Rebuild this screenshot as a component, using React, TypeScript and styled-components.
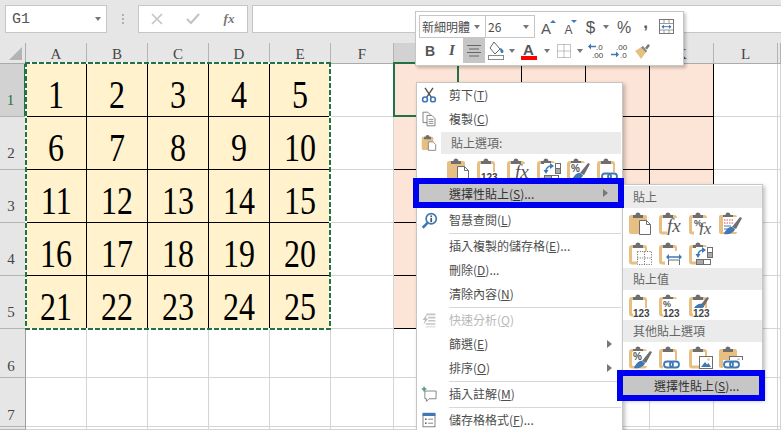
import React from "react";
import styled, { createGlobalStyle } from "styled-components";

const Global = createGlobalStyle`
  html, body { margin: 0; padding: 0; background: #fff; }
  body { font-family: "Noto Sans CJK TC", "Noto Sans", sans-serif; }
`;

const Page = styled.div`
  position: relative;
  width: 781px;
  height: 430px;
  overflow: hidden;
  background: #fff;
`;

/* ---------- formula bar ---------- */
const FormulaBar = styled.div`
  display: flex;
  align-items: flex-start;
  height: 43px;
  box-sizing: border-box;
  padding: 5px 0 0 5px;
  background: #e6e6e6;
`;
const Field = styled.div<{ $w?: number }>`
  display: flex;
  align-items: center;
  box-sizing: border-box;
  height: 28px;
  background: #fff;
  border: 1px solid #c6c6c6;
  ${(p) => (p.$w ? `width: ${p.$w}px; flex: none;` : "flex: 1; border-right: none;")}
`;
const NameText = styled.span`
  flex: 1;
  padding-left: 6px;
  font: 15px "Liberation Mono", monospace;
  color: #555;
`;
const Grip = styled.div`
  flex: none;
  width: 31px;
  height: 28px;
  display: flex;
  flex-direction: column;
  align-items: center;
  justify-content: center;
  gap: 2px;
  & > i { display: block; width: 2px; height: 2px; background: #b0b0b0; }
`;
const FxSlot = styled.span`
  flex: none;
  width: 36px;
  display: flex;
  justify-content: center;
  align-items: center;
`;
const FxText = styled.span`
  font: italic bold 13px "Liberation Serif", serif;
  color: #777;
`;
const Spacer = styled.div`
  flex: none;
  width: 4px;
`;
const Caret = styled.i<{ $c?: string; $mr?: number }>`
  display: block;
  flex: none;
  width: 0;
  height: 0;
  border-left: 3.5px solid transparent;
  border-right: 3.5px solid transparent;
  border-top: 4px solid ${(p) => p.$c || "#777"};
  margin-right: ${(p) => p.$mr || 0}px;
`;

/* ---------- sheet ---------- */
const Sheet = styled.div`
  display: grid;
  grid-template-columns: 26px repeat(5, 61px) 63px repeat(6, 64px) 1fr;
  grid-template-rows: 21px repeat(5, 53px) repeat(2, 49px) 1fr;
  height: 387px;
`;
const Corner = styled.div`
  position: relative;
  background: #e6e6e6;
  border-right: 1px solid #ababab;
  border-bottom: 1px solid #ababab;
  box-sizing: border-box;
  &::after {
    content: "";
    position: absolute;
    right: 3px;
    bottom: 3px;
    width: 0;
    height: 0;
    border-left: 13px solid transparent;
    border-bottom: 13px solid #b4b4b4;
  }
`;
const ColHead = styled.div<{ $on?: boolean }>`
  display: flex;
  align-items: flex-end;
  justify-content: center;
  box-sizing: border-box;
  background: ${(p) => (p.$on ? "#d2d2d2" : "#e6e6e6")};
  border-bottom: 1px solid #ababab;
  border-right: 1px solid #b4b4b4;
  font: 15px/18px "Liberation Serif", serif;
  color: #444;
`;
const RowHead = styled.div<{ $on?: boolean; $pad: number }>`
  display: flex;
  align-items: flex-end;
  justify-content: center;
  box-sizing: border-box;
  padding-bottom: ${(p) => p.$pad}px;
  padding-right: 3px;
  background: ${(p) => (p.$on ? "#d2d2d2" : "#e6e6e6")};
  border-bottom: 1px solid #b4b4b4;
  border-right: ${(p) => (p.$on ? "2px solid #217346" : "1px solid #9e9e9e")};
  font: 15px/14px "Liberation Serif", serif;
  color: ${(p) => (p.$on ? "#217346" : "#444")};
`;
const Cell = styled.div<{ $tone?: "a" | "b" }>`
  display: flex;
  align-items: flex-end;
  justify-content: center;
  box-sizing: border-box;
  background: ${(p) => (p.$tone === "a" ? "#fff2cc" : p.$tone === "b" ? "#fce4d6" : "#fff")};
  border-right: 1px solid ${(p) => (p.$tone ? "#000" : "#d4d4d4")};
  border-bottom: 1px solid ${(p) => (p.$tone ? "#000" : "#d4d4d4")};
`;
const Num = styled.span`
  display: inline-block;
  font: 40px/40px "Liberation Serif", serif;
  color: #000;
  transform: scaleX(0.8);
  padding-bottom: 1px;
`;
const dashH = "repeating-linear-gradient(90deg, #217346 0 5px, #fff 5px 7px)";
const dashV = "repeating-linear-gradient(180deg, #217346 0 5px, #fff 5px 7px)";
const Marquee = styled.div`
  position: absolute;
  left: 25px;
  top: 62px;
  width: 306px;
  height: 268px;
  pointer-events: none;
  background:
    ${dashH} left top / 100% 2px no-repeat,
    ${dashH} left bottom / 100% 2px no-repeat,
    ${dashV} left top / 2px 100% no-repeat,
    ${dashV} right top / 2px 100% no-repeat;
`;
const ActiveCell = styled.div`
  position: absolute;
  left: 393px;
  top: 62px;
  width: 66px;
  height: 55px;
  box-sizing: border-box;
  border: 2px solid #217346;
`;

/* ---------- mini toolbar ---------- */
const Toolbar = styled.div`
  position: absolute;
  left: 415px;
  top: 11px;
  width: 269px;
  height: 55px;
  box-sizing: border-box;
  padding: 3px 3px 2px;
  background: #fff;
  border: 1px solid #c6c6c6;
  box-shadow: 2px 2px 3px rgba(0, 0, 0, 0.22);
`;
const ToolRow = styled.div<{ $h: number }>`
  display: flex;
  align-items: stretch;
  height: ${(p) => p.$h}px;
`;
const Select = styled.div<{ $w: number }>`
  display: flex;
  align-items: center;
  justify-content: space-between;
  box-sizing: border-box;
  flex: none;
  width: ${(p) => p.$w}px;
  margin-right: -1px;
  padding: 0 5px 0 2px;
  border: 1px solid #c6c6c6;
  font-size: 12px;
  color: #4d4d4d;
  &:last-of-type { margin-right: 0; }
`;
const Tool = styled.div<{ $w: number; $on?: boolean }>`
  display: flex;
  align-items: center;
  justify-content: center;
  flex: none;
  width: ${(p) => p.$w}px;
  background: ${(p) => (p.$on ? "#c6c6c6" : "transparent")};
`;
const BoldB = styled.span`
  font: bold 14px "Liberation Sans", sans-serif;
  color: #555;
`;
const ItalicI = styled.span`
  font: italic 15px "Liberation Serif", serif;
  color: #555;
  font-weight: bold;
`;
const ToolGlyph = styled.span<{ $s: number; $b?: boolean; $pb?: number }>`
  font: ${(p) => (p.$b ? "bold " : "")}${(p) => p.$s}px "Liberation Sans", sans-serif;
  color: #555;
  padding-top: 2px;
  padding-bottom: ${(p) => p.$pb || 0}px;
`;

/* ---------- menus ---------- */
const Menu = styled.div`
  position: absolute;
  left: 416px;
  top: 82px;
  width: 207px;
  height: 360px;
  box-sizing: border-box;
  background: #fff;
  border: 1px solid #c6c6c6;
  box-shadow: 2px 2px 4px rgba(0, 0, 0, 0.25);
`;
const SubMenu = styled.div`
  position: absolute;
  left: 622px;
  top: 184px;
  width: 141px;
  height: 215px;
  box-sizing: border-box;
  padding-top: 1px;
  background: #fff;
  border: 1px solid #c6c6c6;
  box-shadow: 2px 2px 4px rgba(0, 0, 0, 0.25);
`;
const Row = styled.div<{ $off?: boolean }>`
  display: flex;
  align-items: center;
  height: 24px;
  font-size: 12px;
  line-height: 24px;
  color: ${(p) => (p.$off ? "#b8b8b8" : "#4d4d4d")};
`;
const IconSlot = styled.span`
  flex: none;
  width: 32px;
  height: 24px;
  display: flex;
  align-items: center;
  justify-content: center;
  padding-right: 8px;
  box-sizing: border-box;
`;
const Label = styled.span`
  flex: 1;
  white-space: nowrap;
`;
const Arrow = styled.i`
  display: block;
  flex: none;
  width: 0;
  height: 0;
  margin-right: 10px;
  border-top: 4px solid transparent;
  border-bottom: 4px solid transparent;
  border-left: 5px solid #777;
`;
const Sep = styled.div`
  height: 1px;
  margin: 1px 1px 0 32px;
  background: #d8d8d8;
`;
const PasteHeadRow = styled.div`
  display: flex;
  align-items: center;
  height: 22px;
  margin-top: 1px;
`;
const HeadIcon = styled.span`
  flex: none;
  width: 24px;
  display: flex;
  justify-content: center;
`;
const HeadBar = styled.div`
  flex: 1;
  height: 22px;
  padding-left: 10px;
  margin-right: 1px;
  background: #ebebeb;
  font-size: 12px;
  line-height: 22px;
  color: #666;
`;
const SubHead = styled.div`
  height: 22px;
  padding-left: 10px;
  background: #ebebeb;
  font-size: 12px;
  line-height: 22px;
  color: #666;
`;
const IconRow = styled.div<{ $pl: number; $h: number }>`
  display: flex;
  gap: 6px;
  height: ${(p) => p.$h}px;
  padding: 4px 0 0 ${(p) => p.$pl}px;
  box-sizing: border-box;
`;
const Highlight = styled.div`
  position: relative;
  z-index: 5;
  display: flex;
  align-items: center;
  background: #c6c6c6;
  outline: 6px solid #0000f0;
  font-size: 12px;
  color: #333;
`;
const MainHighlight = styled(Highlight)`
  height: 18px;
  margin: 4px 4px 6px 2px;
  padding-left: 30px;
`;
const SubHighlight = styled(Highlight)`
  height: 19px;
  margin: 4px 3px 0 0;
  padding-left: 31px;
`;
const Mn = styled.u`
  text-underline-offset: 1px;
`;

/* ---------- icons ---------- */
const PEACH = "#e8bf82";
const GR = "#6e6e6e";
const BL = "#3f78b5";

const Clip = ({ solid, children }: { solid?: boolean; children?: React.ReactNode }) => (
  <svg width="24" height="23" viewBox="0 0 24 23" style={{ flex: "none" }}>
    {solid ? (
      <rect x="0" y="3" width="18" height="19" rx="2" fill={PEACH} />
    ) : (
      <>
        <rect x="1.500" y="4.500" width="15" height="16.500" rx="1.500" fill="#fff" stroke={PEACH} strokeWidth="3" />
        <rect x="3" y="6" width="13" height="13" fill="#fff" />
      </>
    )}
    <path d="M4 6V3h2.500a2.500 2.500 0 0 1 5 0H14v3z" fill={GR} />
    {children}
  </svg>
);
const Doc = () => (
  <>
    <path d="M10.500 8.500h7l4 4v10h-11z" fill="#fff" stroke={GR} />
    <path d="M17.500 8.500v4h4" fill="none" stroke={GR} />
  </>
);
const T = ({ x, y, s, children, i, c, w }: { x: number; y: number; s: number; children: string; i?: boolean; c?: string; w?: number }) => (
  <text
    x={x}
    y={y}
    fontSize={s}
    fontFamily={i ? "Liberation Serif, serif" : "Liberation Sans, sans-serif"}
    fontStyle={i ? "italic" : "normal"}
    fontWeight={w || 400}
    fill={c || "#444"}
  >
    {children}
  </text>
);
const White = ({ x, y, w, h }: { x: number; y: number; w: number; h: number }) => <rect x={x} y={y} width={w} height={h} fill="#fff" />;
const Fx = () => (
  <>
    <White x={8} y={6} w={16} h={17} />
    <T x={8} y={20} s={19} i c="#555">fx</T>
  </>
);
const PctFx = () => (
  <>
    <White x={5} y={6} w={19} h={17} />
    <T x={5} y={14} s={9} w={700} c="#555">%</T>
    <T x={10} y={22} s={17} i c="#555">fx</T>
  </>
);
const BrushOver = ({ pct }: { pct?: boolean }) => (
  <>
    <White x={4} y={5} w={14} h={15} />
    {pct ? (
      <T x={4} y={14} s={10} w={700} c="#555">%</T>
    ) : (
      <>
        <path d="M5 8h10M5 11h10" stroke="#d9534f" strokeDasharray="1.500 1" />
        <path d="M5 14h7M5 17h4" stroke={BL} />
      </>
    )}
    <path d="M13 15l8-10 2 1-6 11z" fill={GR} />
    <path d="M5 22c1-3 5-8 8-7l3 2c-1 4-7 6-11 5z" fill={BL} />
  </>
);
const Dotted = () => (
  <>
    <White x={8} y={9} w={16} h={14} />
    <path d="M8.500 9.500h14v13h-14zM15.500 9.500v13M8.500 16h14" fill="none" stroke="#666" strokeDasharray="1 1.400" />
  </>
);
const ColW = () => (
  <>
    <White x={6} y={9} w={18} h={14} />
    <path d="M9 15h12" stroke={BL} strokeWidth="1.500" />
    <path d="M10 12l-3 3 3 3zM20 12l3 3-3 3z" fill={BL} />
    <path d="M9.500 23v-5h11v5" fill="none" stroke={GR} />
  </>
);
const Swap = () => (
  <>
    <White x={7} y={5} w={17} h={18} />
    <path d="M9 13a5 5 0 0 1 5-5" fill="none" stroke={BL} strokeWidth="1.500" />
    <path d="M13 5l4 3-4 3zM6.500 12l2.500 4 2.500-4z" fill={BL} />
    <rect x="18.500" y="5.500" width="5" height="5" fill="#fff" stroke={GR} />
    <rect x="18.500" y="10.500" width="5" height="5" fill="#a9a9a9" stroke={GR} />
    <rect x="7.500" y="17.500" width="7" height="5" fill="#a9a9a9" stroke={GR} />
    <rect x="14.500" y="17.500" width="7" height="5" fill="#fff" stroke={GR} />
  </>
);
const Num123 = () => (
  <>
    <White x={4} y={14} w={20} h={9} />
    <T x={4} y={22.500} s={10} w={700} c="#444">123</T>
  </>
);
const LinkOver = () => (
  <>
    <White x={4} y={14} w={20} h={9} />
    <rect x="5" y="15.500" width="9" height="6" rx="3" fill="none" stroke={BL} strokeWidth="1.800" />
    <rect x="11" y="15.500" width="9" height="6" rx="3" fill="none" stroke={BL} strokeWidth="1.800" />
  </>
);
const Pic = ({ x = 10, y = 10 }: { x?: number; y?: number }) => (
  <>
    <rect x={x + 0.5} y={y + 0.5} width="13" height="12" fill="#fff" stroke={GR} />
    <circle cx={x + 9.5} cy={y + 3.5} r="1.200" fill={PEACH} />
    <path d={`M${x + 2} ${y + 11}l4-5 2 2.500 1.500-1.500 2.500 4z`} fill={BL} />
  </>
);

const Scissors = () => (
  <svg width="16" height="16" viewBox="0 0 20 20">
    <path d="M5 1l8 12M15 1L7 13" stroke="#555" strokeWidth="1.800" fill="none" />
    <circle cx="5" cy="15.500" r="3" fill="none" stroke={BL} strokeWidth="2" />
    <circle cx="15" cy="15.500" r="3" fill="none" stroke={BL} strokeWidth="2" />
  </svg>
);
const CopyIcon = () => (
  <svg width="16" height="16" viewBox="0 0 20 20">
    <path d="M2.500 1.500h6l3 3v10h-9z" fill="#fff" stroke="#666" />
    <path d="M7.500 5.500h6l4 4v9h-10z" fill="#fff" stroke="#666" />
    <path d="M9.500 10.500h6M9.500 13h6M9.500 15.500h6" stroke="#777" />
  </svg>
);
const SmallPaste = () => (
  <svg width="17" height="18" viewBox="0 0 22 22">
    <rect x="1" y="3" width="15" height="17" rx="1.500" fill={PEACH} />
    <path d="M4 6V3h2a2.500 2.500 0 0 1 5 0h2v3z" fill={GR} />
    <path d="M9.500 9.500h6l3.500 3.500v7.500h-9.500z" fill="#fff" stroke={GR} />
  </svg>
);
const Lookup = () => (
  <svg width="17" height="17" viewBox="0 0 20 20">
    <circle cx="12" cy="8" r="6" fill="#fff" stroke={BL} strokeWidth="2" />
    <path d="M8 12.500L2 18.500" stroke={BL} strokeWidth="3" />
    <rect x="11" y="7" width="2" height="5" fill="#555" />
    <rect x="11" y="4" width="2" height="2" fill="#555" />
  </svg>
);
const Quick = () => (
  <svg width="16" height="16" viewBox="0 0 20 20">
    <path d="M7 2h11v2H7zM9 6h9v2H9zM9 10h9v2H9zM6 14h12v2H6zM6 18h12v1H6z" fill="#c4c4c4" />
    <path d="M8 2L2 10h3l-2 6 6-8H6z" fill="#bdbdbd" />
  </svg>
);
const Comment = () => (
  <svg width="17" height="17" viewBox="0 0 22 22">
    <path d="M5 6.500h14.500v10h-9l-3.500 3.500v-3.500H5z" fill="#fff" stroke="#666" />
    <path d="M1 4h6M4 1v6" stroke="#4c9a7e" strokeWidth="2" />
  </svg>
);
const FormatCells = () => (
  <svg width="16" height="16" viewBox="0 0 20 20">
    <rect x="2.500" y="2.500" width="15" height="16" fill="#fff" stroke="#666" />
    <rect x="2" y="1" width="16" height="4" fill={BL} />
    <rect x="5" y="8" width="2" height="2" fill="#666" />
    <path d="M9 9h6M9 14h6" stroke="#666" />
    <rect x="5" y="13" width="2" height="2" fill="#666" />
  </svg>
);
const CancelX = () => (
  <svg width="12" height="12" viewBox="0 0 12 12">
    <path d="M1 1l10 10M11 1L1 11" stroke="#c4c4c4" strokeWidth="1.600" />
  </svg>
);
const CheckMark = () => (
  <svg width="14" height="12" viewBox="0 0 14 12">
    <path d="M1 6l4 4 8-9" fill="none" stroke="#c4c4c4" strokeWidth="2.200" />
  </svg>
);
const SizeA = ({ up }: { up?: boolean }) => (
  <svg width="20" height="20" viewBox="0 0 20 20">
    <T x={up ? 5 : 5.500} y={16.500} s={up ? 15 : 12} c="#555">A</T>
    <path d={up ? "M14 6l3-3 3 3z" : "M12 3h6l-3 3z"} fill={BL} />
  </svg>
);
const Wrap = () => (
  <svg width="16" height="16" viewBox="0 0 16 16">
    <rect x="0.500" y="0.500" width="14" height="14" fill="#fff" stroke="#777" />
    <path d="M1 4.500h13M1 11h13M5 1v3M10 1v3M5 11v3M10 11v3" stroke="#999" />
    <path d="M3 7.700h9" stroke={BL} />
    <path d="M5 5.700l-2.500 2 2.500 2zM10 5.700l2.500 2-2.500 2z" fill={BL} />
  </svg>
);
const CenterLines = () => (
  <svg width="16" height="14" viewBox="0 0 16 14">
    <path d="M1 1.500h14M3 5h10M1 8.500h14M3 12h10" stroke="#666" />
  </svg>
);
const Bucket = () => (
  <svg width="18" height="20" viewBox="0 0 18 20">
    <path d="M7 1l6 7-5 5-5-6z" fill="#fff" stroke="#666" />
    <path d="M13 7c2 .5 3.500 2 3.500 3.500a1.500 1.500 0 0 1-3 0z" fill={BL} />
    <rect x="1.500" y="14.500" width="15" height="4" fill="#fff" stroke="#888" />
  </svg>
);
const FontColor = () => (
  <svg width="18" height="20" viewBox="0 0 18 20">
    <T x={3} y={14} s={15} w={700} c="#555">A</T>
    <rect x="1" y="15" width="16" height="4" fill="#ff0000" />
  </svg>
);
const Borders = () => (
  <svg width="14" height="14" viewBox="0 0 14 14">
    <path d="M.5.500h13v13H.5zM7 .5v13M.5 7h13" fill="none" stroke="#888" strokeDasharray="1 1" />
  </svg>
);
const Decimal = ({ inc }: { inc?: boolean }) => (
  <svg width="18" height="16" viewBox="0 0 18 16">
    {inc ? (
      <>
        <T x={5} y={7} s={8} c="#444">.00</T>
        <T x={9} y={15} s={8} c="#444">.0</T>
        <path d="M0 11.500h6" stroke={BL} strokeWidth="1.500" />
        <path d="M5 8.500l3 3-3 3z" fill={BL} />
      </>
    ) : (
      <>
        <T x={8} y={7} s={8} c="#444">.0</T>
        <T x={4} y={15} s={8} c="#444">.00</T>
        <path d="M2 3.500h6" stroke={BL} strokeWidth="1.500" />
        <path d="M3 .5l-3 3 3 3z" fill={BL} />
      </>
    )}
  </svg>
);
const Brush = () => (
  <svg width="18" height="18" viewBox="0 0 18 18">
    <path d="M11 6l3-4 2 1.500-3 4z" fill="#777" />
    <path d="M1 9l8-5 4 5-6 8C5 14 3 11 1 9z" fill="#e8bf82" />
    <path d="M9 4l4 5-1 1.500-5-5z" fill="#888" />
  </svg>
);
const PctNum = () => (
  <>
    <White x={4} y={5} w={14} h={9} />
    <T x={4} y={13} s={9} w={700} c="#555">%</T>
    <Num123 />
  </>
);
const BrushNum = () => (
  <>
    <path d="M10 13l8-10 2 1-6 10z" fill={GR} />
    <path d="M5 14c2-3 5-5 8-4l2 2c-1 2-6 3-10 2z" fill={BL} />
    <Num123 />
  </>
);

/* ---------- data ---------- */
const colsA = ["A", "B", "C", "D", "E"];
const colsB = ["G", "H", "I", "J", "K"];
const rowsData = [
  { n: 1, pad: 9 },
  { n: 2, pad: 9 },
  { n: 3, pad: 9 },
  { n: 4, pad: 9 },
  { n: 5, pad: 9 },
  { n: 6, pad: 4 },
  { n: 7, pad: 4 },
  { n: 8, pad: 0 },
];
const Item = ({ icon, text, m, tail, off, arrow }: { icon?: React.ReactNode; text: string; m?: string; tail?: string; off?: boolean; arrow?: boolean }) => (
  <Row $off={off}>
    <IconSlot>{icon}</IconSlot>
    <Label>
      {text}
      {m && (
        <>
          (<Mn>{m}</Mn>)
        </>
      )}
      {tail}
    </Label>
    {arrow && <Arrow />}
  </Row>
);

export default function App() {
  return (
    <Page>
      <Global />
      <FormulaBar>
        <Field $w={102}>
          <NameText>G1</NameText>
          <Caret $c="#777" $mr={5} />
        </Field>
        <Grip>
          <i />
          <i />
          <i />
        </Grip>
        <Field $w={110}>
          <FxSlot><CancelX /></FxSlot>
          <FxSlot><CheckMark /></FxSlot>
          <FxSlot><FxText>fx</FxText></FxSlot>
        </Field>
        <Spacer />
        <Field />
      </FormulaBar>

      <Sheet>
        <Corner />
        {["A", "B", "C", "D", "E", "F", "G", "H", "I", "J", "K", "L", "M"].map((c) => (
          <ColHead key={c} $on={c === "G"}>{c === "M" ? "" : c}</ColHead>
        ))}
        {rowsData.map((r) => (
          <React.Fragment key={r.n}>
            <RowHead $on={r.n === 1} $pad={r.pad}>{r.n === 8 ? "" : r.n}</RowHead>
            {colsA.map((c, i) =>
              r.n <= 5 ? (
                <Cell key={c} $tone="a">
                  <Num>{(r.n - 1) * 5 + i + 1}</Num>
                </Cell>
              ) : (
                <Cell key={c} />
              )
            )}
            <Cell />
            {colsB.map((c) => <Cell key={c} $tone={r.n <= 5 ? "b" : undefined} />)}
            <Cell />
            <Cell />
          </React.Fragment>
        ))}
      </Sheet>
      <Marquee />
      <ActiveCell />

      <Toolbar>
        <ToolRow $h={23}>
          <Select $w={67}>新細明體<Caret /></Select>
          <Select $w={50}>26<Caret /></Select>
          <Tool $w={23}><SizeA up /></Tool>
          <Tool $w={23}><SizeA /></Tool>
          <Tool $w={21}><ToolGlyph $s={17}>$</ToolGlyph></Tool>
          <Tool $w={10}><Caret /></Tool>
          <Tool $w={26}><ToolGlyph $s={16}>%</ToolGlyph></Tool>
          <Tool $w={17}><ToolGlyph $s={17} $b $pb={9}>,</ToolGlyph></Tool>
          <Tool $w={26}><Wrap /></Tool>
        </ToolRow>
        <ToolRow $h={25}>
          <Tool $w={22}><BoldB>B</BoldB></Tool>
          <Tool $w={22}><ItalicI>I</ItalicI></Tool>
          <Tool $w={22} $on><CenterLines /></Tool>
          <Tool $w={22}><Bucket /></Tool>
          <Tool $w={10}><Caret /></Tool>
          <Tool $w={24}><FontColor /></Tool>
          <Tool $w={12}><Caret /></Tool>
          <Tool $w={22}><Borders /></Tool>
          <Tool $w={10}><Caret /></Tool>
          <Tool $w={23}><Decimal /></Tool>
          <Tool $w={23}><Decimal inc /></Tool>
          <Tool $w={23}><Brush /></Tool>
        </ToolRow>
      </Toolbar>

      <Menu>
        <Item icon={<Scissors />} text="剪下" m="T" />
        <Item icon={<CopyIcon />} text="複製" m="C" />
        <PasteHeadRow>
          <HeadIcon><SmallPaste /></HeadIcon>
          <HeadBar>貼上選項:</HeadBar>
        </PasteHeadRow>
        <IconRow $pl={30} $h={26}>
          <Clip solid><Doc /></Clip>
          <Clip><Num123 /></Clip>
          <Clip><Fx /></Clip>
          <Clip><Swap /></Clip>
          <Clip><BrushOver pct /></Clip>
          <Clip><LinkOver /></Clip>
        </IconRow>
        <MainHighlight>
          <Label>選擇性貼上(<Mn>S</Mn>)...</Label>
          <Arrow />
        </MainHighlight>
        <Item icon={<Lookup />} text="智慧查閱" m="L" />
        <Sep />
        <Item text="插入複製的儲存格" m="E" tail="..." />
        <Item text="刪除" m="D" tail="..." />
        <Item text="清除內容" m="N" />
        <Sep />
        <Item icon={<Quick />} text="快速分析" m="Q" off />
        <Item text="篩選" m="E" arrow />
        <Item text="排序" m="O" arrow />
        <Sep />
        <Item icon={<Comment />} text="插入註解" m="M" />
        <Sep />
        <Item icon={<FormatCells />} text="儲存格格式" m="F" tail="..." />
      </Menu>

      <SubMenu>
        <SubHead>貼上</SubHead>
        <IconRow $pl={6} $h={30}>
          <Clip solid><Doc /></Clip>
          <Clip><Fx /></Clip>
          <Clip><PctFx /></Clip>
          <Clip solid><BrushOver /></Clip>
        </IconRow>
        <IconRow $pl={6} $h={30}>
          <Clip><Dotted /></Clip>
          <Clip><ColW /></Clip>
          <Clip><Swap /></Clip>
        </IconRow>
        <SubHead>貼上值</SubHead>
        <IconRow $pl={6} $h={30}>
          <Clip><Num123 /></Clip>
          <Clip><PctNum /></Clip>
          <Clip><BrushNum /></Clip>
        </IconRow>
        <SubHead>其他貼上選項</SubHead>
        <IconRow $pl={6} $h={30}>
          <Clip><BrushOver pct /></Clip>
          <Clip><LinkOver /></Clip>
          <Clip><Pic /></Clip>
          <Clip solid><Pic /><LinkOver /></Clip>
        </IconRow>
        <SubHighlight>
          <Label>選擇性貼上(<Mn>S</Mn>)...</Label>
        </SubHighlight>
      </SubMenu>
    </Page>
  );
}
